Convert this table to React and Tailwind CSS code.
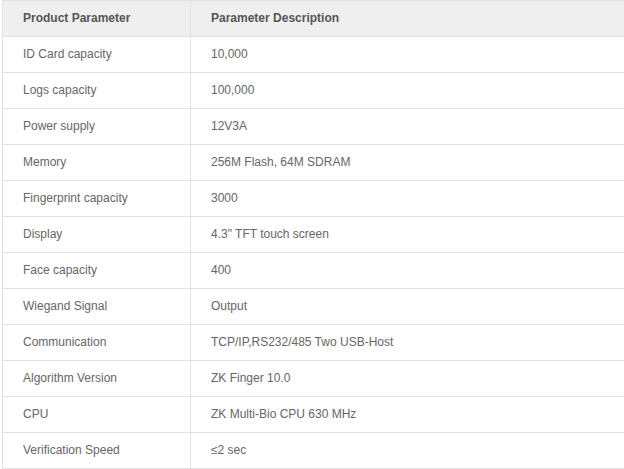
import React from "react";

const rows = [
  ["ID Card capacity", "10,000"],
  ["Logs capacity", "100,000"],
  ["Power supply", "12V3A"],
  ["Memory", "256M Flash, 64M SDRAM"],
  ["Fingerprint capacity", "3000"],
  ["Display", "4.3\" TFT touch screen"],
  ["Face capacity", "400"],
  ["Wiegand Signal", "Output"],
  ["Communication", "TCP/IP,RS232/485 Two USB-Host"],
  ["Algorithm Version", "ZK Finger 10.0"],
  ["CPU", "ZK Multi-Bio CPU 630 MHz"],
  ["Verification Speed", "\u22642 sec"],
];

export default function App() {
  return (
    <div className="bg-white w-[624px] h-[469px] overflow-hidden pl-[2px]" style={{ fontFamily: '"Liberation Sans", Arial, sans-serif' }}>
      <table className="w-[640px] border-collapse text-[12px] table-fixed">
        <thead>
          <tr className="bg-[#efefef] h-[36px]">
            <th className="w-[188px] border border-[#e2e2e2] text-left font-bold text-[#555] pl-[20px] pr-0 pt-0 pb-[1px]">Product Parameter</th>
            <th className="border border-[#e2e2e2] text-left font-bold text-[#555] pl-[20px] pr-0 pt-0 pb-[1px]">Parameter Description</th>
          </tr>
        </thead>
        <tbody>
          {rows.map(([a, b]) => (
            <tr key={a} className="h-[36px]">
              <td className="border border-[#e2e2e2] text-[#666] pl-[20px] pr-0 pt-0 pb-[1px]">{a}</td>
              <td className="border border-[#e2e2e2] text-[#666] pl-[20px] pr-0 pt-0 pb-[1px]">{b}</td>
            </tr>
          ))}
        </tbody>
      </table>
    </div>
  );
}
